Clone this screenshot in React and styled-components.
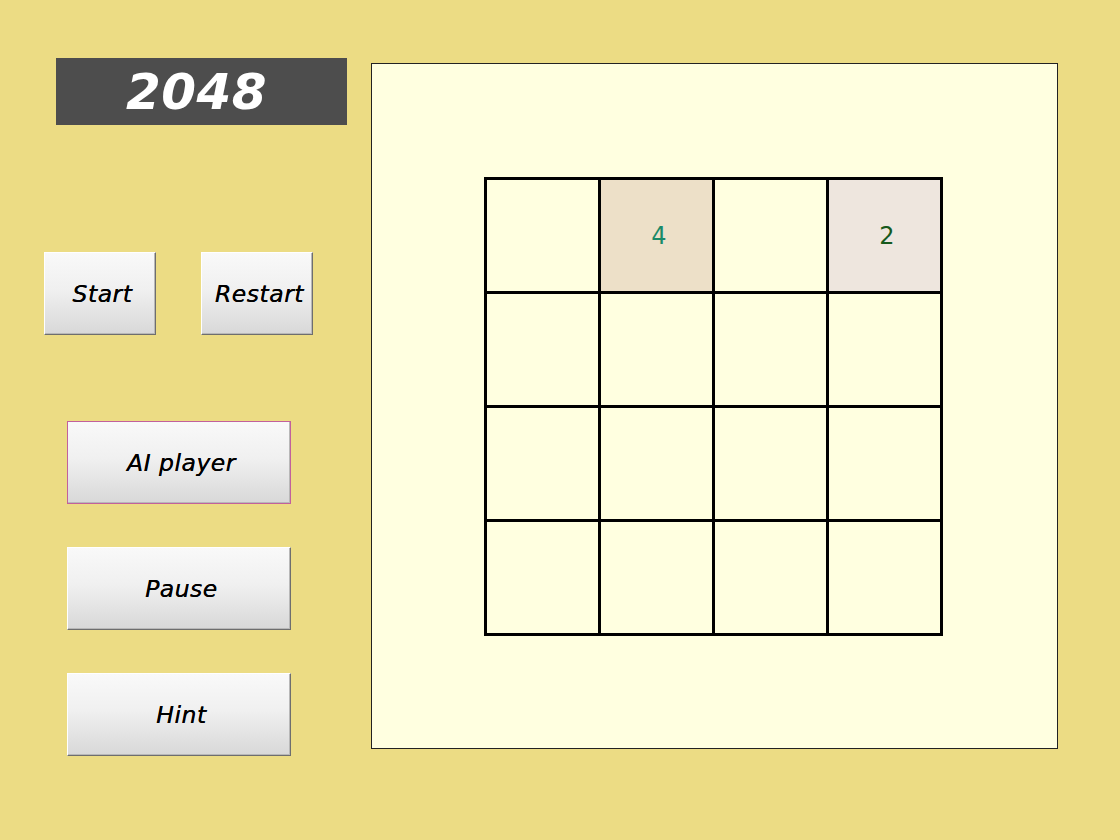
import React from 'react';
import styled, {createGlobalStyle} from 'styled-components';

const GlobalStyle = createGlobalStyle`
    html, body {
        margin: 0;
        padding: 0;
        background: #ecdc84;
    }
    body {
        width: 1120px;
        height: 840px;
        overflow: hidden;
        font-family: "DejaVu Sans", "Liberation Sans", sans-serif;
    }
`;

const Frame = styled.div`
    display: flex;
    align-items: flex-start;
    width: 1120px;
    height: 840px;
`;

const Side = styled.div`
    display: flex;
    flex-direction: column;
    width: 371px;
    padding-top: 58px;
    box-sizing: border-box;
`;

const Title = styled.div`
    margin-left: 56px;
    width: 291px;
    height: 67px;
    background: #4d4d4d;
    color: #fff;
    display: flex;
    align-items: center;
    justify-content: center;
    font-size: 50px;
    font-weight: bold;
    font-style: italic;
    letter-spacing: 0.5px;
    padding-right: 10px;
    box-sizing: border-box;
`;

const TopButtons = styled.div`
    display: flex;
    gap: 45px;
    margin: 127px 0 0 44px;
`;

const Stack = styled.div`
    display: flex;
    flex-direction: column;
    gap: 43px;
    margin: 86px 0 0 67px;
`;

const Button = styled.button`
    width: ${p => p.$wide ? '224px' : '112px'};
    height: 83px;
    box-sizing: border-box;
    font-family: "DejaVu Sans", sans-serif;
    font-style: italic;
    font-size: 23.5px;
    color: #000;
    letter-spacing: 0.5px;
    text-shadow: 0 0 0.4px #000;
    background: linear-gradient(#f9f9f9 0%, #f0f0f0 45%, #d8d8d8 100%);
    border-style: solid;
    border-width: 1px;
    border-color: #ffffff #6e6e6e #6e6e6e #ffffff;
    box-shadow: inset -1px -1px 0 #b8b8b8;
    outline: ${p => p.$focus ? '1px solid #c2609c' : 'none'};
    outline-offset: -1px;
    padding: 0 0 0 5px;
    cursor: pointer;
`;

const Panel = styled.div`
    margin-top: 63px;
    width: 687px;
    height: 686px;
    box-sizing: border-box;
    background: #ffffe0;
    border: 1px solid #222;
    display: flex;
    align-items: center;
    justify-content: center;
`;

const Board = styled.div`
    display: grid;
    grid-template-columns: repeat(4, 111px);
    grid-template-rows: repeat(4, 111px);
    gap: 3px;
    padding: 3px;
    background: #000;
    margin-right: 2px;
`;

const tileBg = {0: '#ffffe0', 2: '#eee6de', 4: '#ede0c8'};
const tileFg = {2: '#165a1c', 4: '#1a8a68'};

const Cell = styled.div`
    background: ${p => tileBg[p.$v]};
    color: ${p => tileFg[p.$v] || '#000'};
    display: flex;
    align-items: center;
    justify-content: center;
    font-size: 24px;
    padding: 2px 0 0 5px;
    box-sizing: border-box;
`;

const grid = [
    [0, 4, 0, 2],
    [0, 0, 0, 0],
    [0, 0, 0, 0],
    [0, 0, 0, 0],
];

export default function App() {
    return (
        <>
            <GlobalStyle/>
            <Frame>
                <Side>
                    <Title>2048</Title>
                    <TopButtons>
                        <Button>Start</Button>
                        <Button>Restart</Button>
                    </TopButtons>
                    <Stack>
                        <Button $wide $focus>AI player</Button>
                        <Button $wide>Pause</Button>
                        <Button $wide>Hint</Button>
                    </Stack>
                </Side>
                <Panel>
                    <Board>
                        {grid.flat().map((v, i) => (
                            <Cell key={i} $v={v}>{v ? v : ''}</Cell>
                        ))}
                    </Board>
                </Panel>
            </Frame>
        </>
    );
}
